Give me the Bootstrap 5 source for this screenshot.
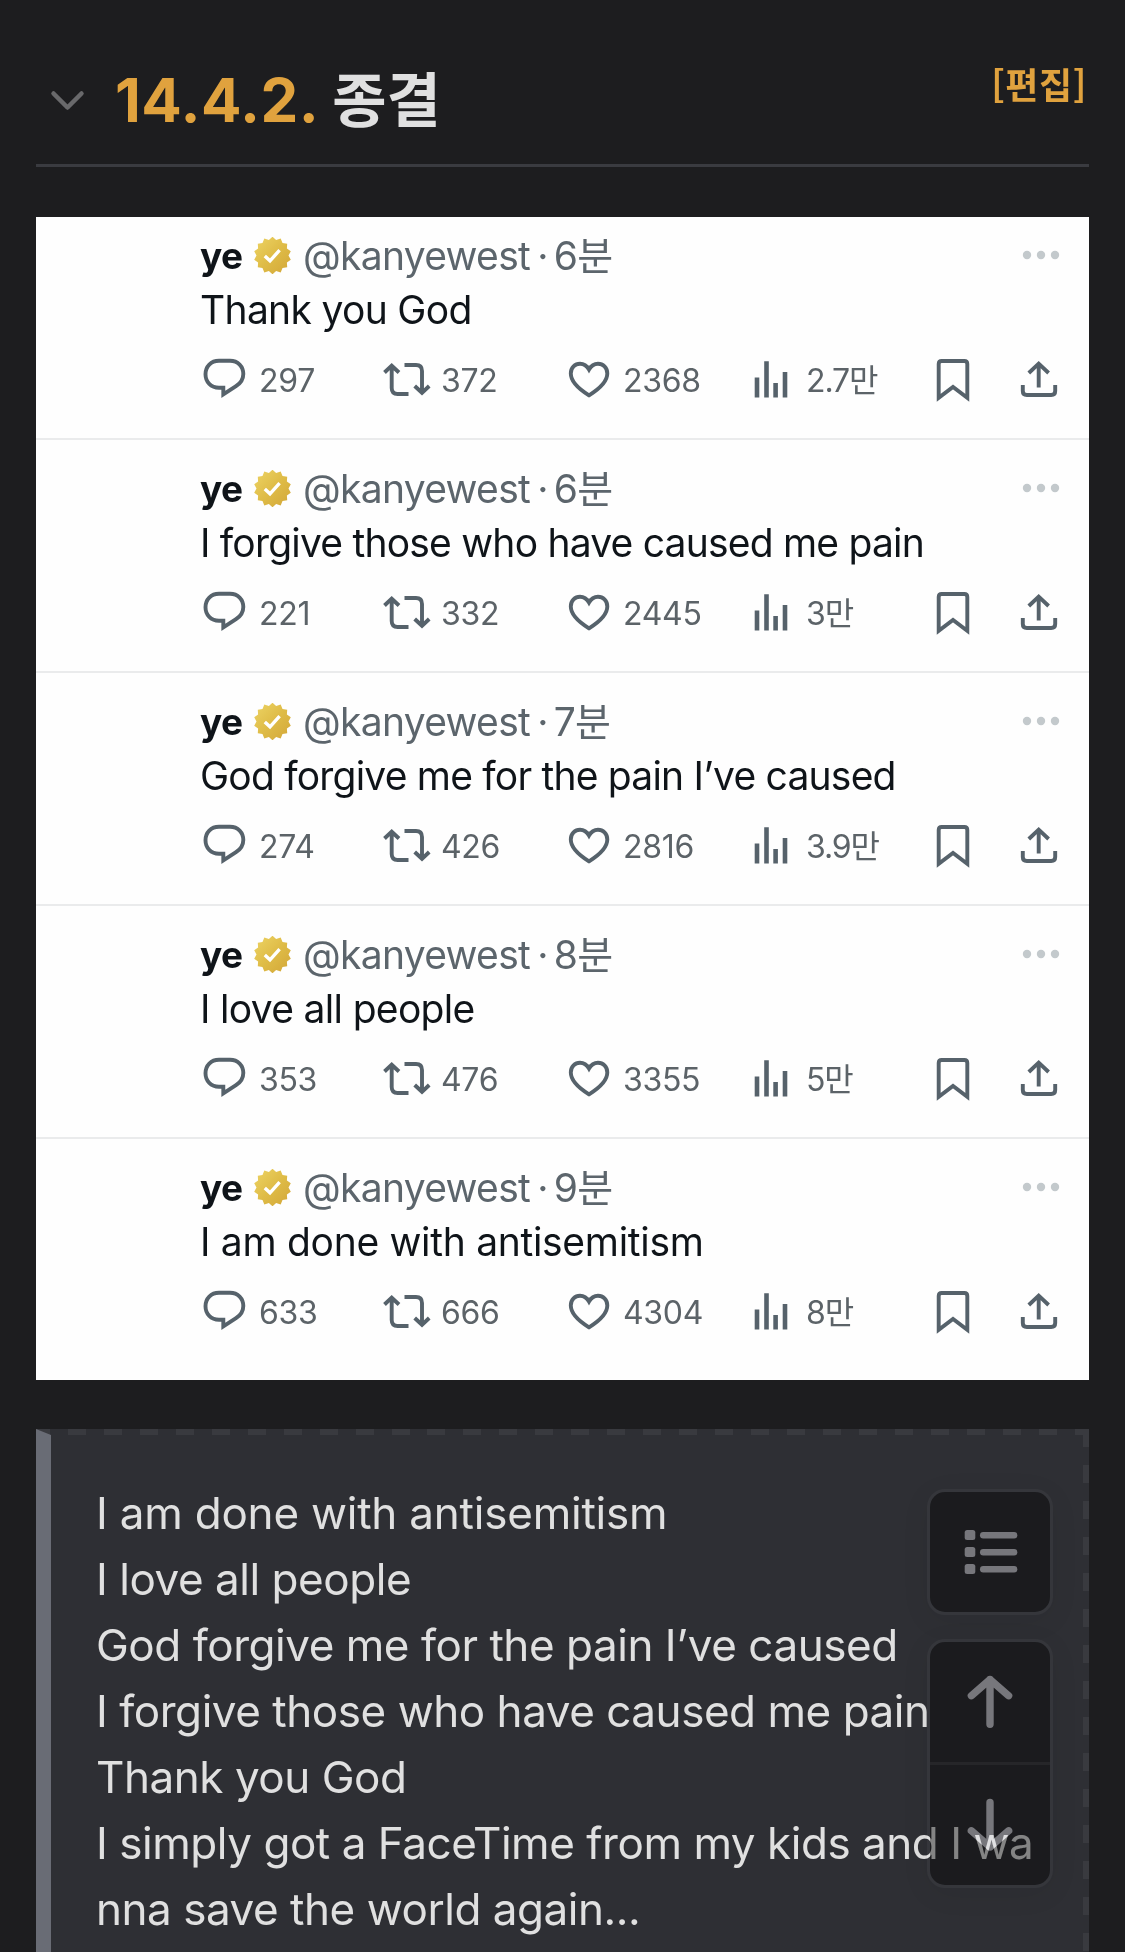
<!DOCTYPE html>
<html lang="ko">
<head>
<meta charset="utf-8">
<meta name="viewport" content="width=device-width, initial-scale=1">
<title>14.4.2. 종결</title>
<link href="https://cdn.jsdelivr.net/npm/bootstrap@5.3.0/dist/css/bootstrap.min.css" rel="stylesheet">
<style>
html,body{height:1952px;overflow:hidden}
body{background:#1d1d1f;color:#e0e0e0;font-family:Inter,"Noto Sans CJK KR",sans-serif;padding:0 36px;position:relative}
svg{display:block;flex:none}
.section-head{height:167px;padding-top:64px;border-bottom:3px solid #3a3b40;margin-bottom:50px}
.section-title{font-size:60px;line-height:72px;font-weight:700;letter-spacing:.5px;white-space:pre}
.section-title .num,.edit-link{color:#e0a23e}
.section-title .name{font-family:"Noto Sans CJK KR",sans-serif;font-size:59px;line-height:60px;letter-spacing:0}
.chevron{margin:8px 30px 0 14px}
.edit-link{font:600 36px/44px "Noto Sans CJK KR",sans-serif;letter-spacing:.6px;margin:-3px 2px 0 0;text-decoration:none}
.shot{height:1163px;background:#fefefe;color:#0f1419}
.tweet{height:233px;padding:22px 28px 0 164px;border-bottom:2px solid #eaebec}
.tweet:first-child{height:223px;padding-top:12px}
.tweet:last-child{border:0}
.tweet-head,.tweet-text{font-size:39px;line-height:54px;letter-spacing:-.68px;white-space:nowrap}
.tweet-text{height:53px}
.tweet-text.tight{letter-spacing:-.79px}
.tweet-text.loose{letter-spacing:-.3px}
.who{font-size:37px;font-weight:700;letter-spacing:-.6px;width:54px}
.tweet-head .seal{margin-top:-2px}
.tweet-head .dots{margin-top:-2px}
.handle{color:#5c656c;margin-left:12px}
.handle i{font-style:normal;margin:0 6px 0 7px}
.stats{display:grid;grid-template-columns:179px 186px 184px 183px 83px 60px;margin:19px 0 0 1px;font-size:32px;line-height:51px;color:#5c6368;letter-spacing:-.3px}
.stats svg{fill:none;stroke:#56626b;stroke-width:3.9}
.stats .num-reply{padding-left:6px}
.stats .num-retweet{padding-left:9px}
.stats .num-heart{padding-left:5px}
.stats .num-views{padding-left:4px;letter-spacing:-1.1px}
.quote{position:relative;margin-top:49px;height:560px;background:#2e2f34;padding:52px 0 0 60px;font-size:44px;line-height:65.95px;letter-spacing:-.46px;white-space:nowrap}
.quote .loose{letter-spacing:-.22px}
.q-left,.q-top,.q-right{position:absolute;top:0}
.q-left{left:0;width:15px;height:100%;background:#696c75;clip-path:polygon(0 0,100% 6px,100% 100%,0 100%)}
.q-top{left:0;right:0;height:6px;background:repeating-linear-gradient(90deg,#393a3f 0 18px,transparent 18px 35.98px) -4.3px 0/1200px 6px}
.q-right{right:0;width:6px;height:100%;background:repeating-linear-gradient(180deg,#393a3f 0 18px,transparent 18px 36px)}
.float-box{position:absolute;left:927px;width:126px;border:3px solid rgba(255,255,255,.035);border-radius:18px;background:rgba(0,0,0,.41);background-clip:padding-box;box-shadow:0 6px 30px rgba(0,0,0,.06)}
.float-list{top:1489px;height:126px}
.float-nav{top:1639px;height:249px}
.float-nav .half{height:120px}
.float-nav .half+.half{border-top:3px solid rgba(255,255,255,.05);height:123px}
.float-icon{position:absolute;mix-blend-mode:plus-lighter}
.icon-list{left:964px;top:1528px}
.icon-up{left:966px;top:1673px}
.icon-down{left:966px;top:1796px}
</style>
<script src="https://cdn.jsdelivr.net/npm/bootstrap@5.3.0/dist/js/bootstrap.bundle.min.js"></script>
</head>
<body>
<svg width="0" height="0" class="position-absolute">
<defs>
<linearGradient id="gold" x1="0" y1="0" x2="1" y2="1"><stop offset="0" stop-color="#edd465"/><stop offset=".5" stop-color="#dfbc47"/><stop offset="1" stop-color="#d2a638"/></linearGradient>
<symbol id="reply" viewBox="0 0 52 48"><path d="M18 5.8H29C37 5.8 42.3 11.5 42.3 19C42.3 24 39.5 28.3 35 31.2L22.3 39.4V32.8H18C10 32.8 4.5 27 4.5 19.3C4.5 11.5 10 5.8 18 5.8Z"/></symbol>
<symbol id="retweet" viewBox="0 0 52 48"><path d="M4.5 17.5L11.7 10.7L19 17.5M11.7 11V33Q11.7 39 17.7 39H28.5M24.5 10H36Q42 10 42 16V38M34.7 31L42 37.8L49.2 31"/></symbol>
<symbol id="heart" viewBox="0 0 52 48"><path d="M23 40.3C12 33.5 4.8 26.5 4.8 18.5C4.8 12.5 9 8.8 14 8.8C18 8.8 21 11 23 14.5C25 11 28 8.8 32 8.8C37 8.8 41.3 12.5 41.3 18.5C41.3 26.5 34 33.5 23 40.3Z"/></symbol>
<symbol id="views" viewBox="0 0 52 48"><path d="M7 22.5V42.4M16.5 6.3V42.4M25.6 28V42.4M35 17V42.4" stroke-width="4.6"/></symbol>
<symbol id="save" viewBox="0 0 52 48"><path d="M5.7 42.8V9Q5.7 6 8.7 6H31.3Q34.3 6 34.3 9V42.8L20 32Z"/></symbol>
<symbol id="share" viewBox="0 0 52 48"><path d="M12.8 18L22.7 8.6L32.6 18M22.7 9V32.4M6.8 30V36Q6.8 40 10.8 40H35.2Q39.2 40 39.2 36V30"/></symbol>
</defs>
</svg>

<header class="section-head d-flex align-items-start">
<svg class="chevron" width="35" height="56" viewBox="0 0 35 56" fill="none" stroke="#69696b" stroke-width="4.5" stroke-linecap="round" stroke-linejoin="round"><path d="M3.5 21.5L17.5 35.5L31.5 21.5"/></svg>
<h2 class="section-title m-0"><span class="num">14.4.2.</span> <span class="name">종결</span></h2>
<a class="edit-link ms-auto" href="#">[편집]</a>
</header>

<section class="shot" id="tweets"></section>

<blockquote class="quote mb-0">
<div class="q-top"></div><div class="q-left"></div><div class="q-right"></div>
<span class="loose">I am done with antisemitism</span><br>I love all people<br>God forgive me for the pain I’ve caused<br>I forgive those who have caused me pain<br>Thank you God<br>I simply got a FaceTime from my kids and I wa<br>nna save the world again...
</blockquote>

<div class="float-box float-list"></div>
<div class="float-box float-nav"><div class="half"></div><div class="half"></div></div>
<svg class="float-icon icon-list" width="56" height="48" fill="#5c5c5e"><rect x=".7" y="2" width="10.6" height="10" rx="2.5"/><rect x=".7" y="19" width="10.6" height="10" rx="2.5"/><rect x=".7" y="36" width="10.6" height="10" rx="2.5"/><rect x="16" y="4" width="37.3" height="6.4" rx="3.2"/><rect x="16" y="21" width="37.3" height="6.4" rx="3.2"/><rect x="16" y="38" width="37.3" height="6.4" rx="3.2"/></svg>
<svg class="float-icon icon-up" width="48" height="58" fill="none" stroke="#5c5c5e" stroke-width="7.4" stroke-linecap="round" stroke-linejoin="round"><path d="M24 51.3V6.5M5.4 22.7L24 6.5L42.6 22.7"/></svg>
<svg class="float-icon icon-down" width="48" height="58" fill="none" stroke="#5c5c5e" stroke-width="7.4" stroke-linecap="round" stroke-linejoin="round"><path d="M24 6.5V51M5.4 34.8L24 51L42.6 34.8"/></svg>

<script>
const tweets=[
['6분','Thank you God','297','372','2368','2.7만',''],
['6분','I forgive those who have caused me pain','221','332','2445','3만','tight'],
['7분','God forgive me for the pain I’ve caused','274','426','2816','3.9만','tight'],
['8분','I love all people','353','476','3355','5만',''],
['9분','I am done with antisemitism','633','666','4304','8만','loose']];
/* fourteen-pointed seal */
const seal=Array.from({length:28},(_,i)=>{const a=i*Math.PI/14,r=i%2?16:18.8;return (18.5+r*Math.sin(a)).toFixed(1)+','+(18.5-r*Math.cos(a)).toFixed(1)}).join(' ');
const stat=(id,n)=>`<div class="d-flex"><svg width="52" height="48"><use href="#${id}"/></svg><span class="num-${id}">${n}</span></div>`;
document.getElementById('tweets').innerHTML=tweets.map(t=>`<article class="tweet">
<div class="tweet-head d-flex align-items-center"><span class="who">ye</span><svg class="seal" width="37" height="37" viewBox="0 0 37 37"><polygon points="${seal}" fill="url(#gold)"/><path d="M10.8 19L16 23.8L25.6 13.2" fill="none" stroke="#fff" stroke-width="3.4"/></svg><span class="handle">@kanyewest<i>·</i>${t[0]}</span>
<svg class="dots ms-auto" width="40" height="10" fill="#c3c9cc"><circle cx="6" cy="5" r="4.2"/><circle cx="20" cy="5" r="4.2"/><circle cx="34" cy="5" r="4.2"/></svg></div>
<div class="tweet-text ${t[6]}">${t[1]}</div>
<div class="stats">${stat('reply',t[2])}${stat('retweet',t[3])}${stat('heart',t[4])}${stat('views',t[5])}${stat('save','')}${stat('share','')}</div>
</article>`).join('');
</script>
</body>
</html>
